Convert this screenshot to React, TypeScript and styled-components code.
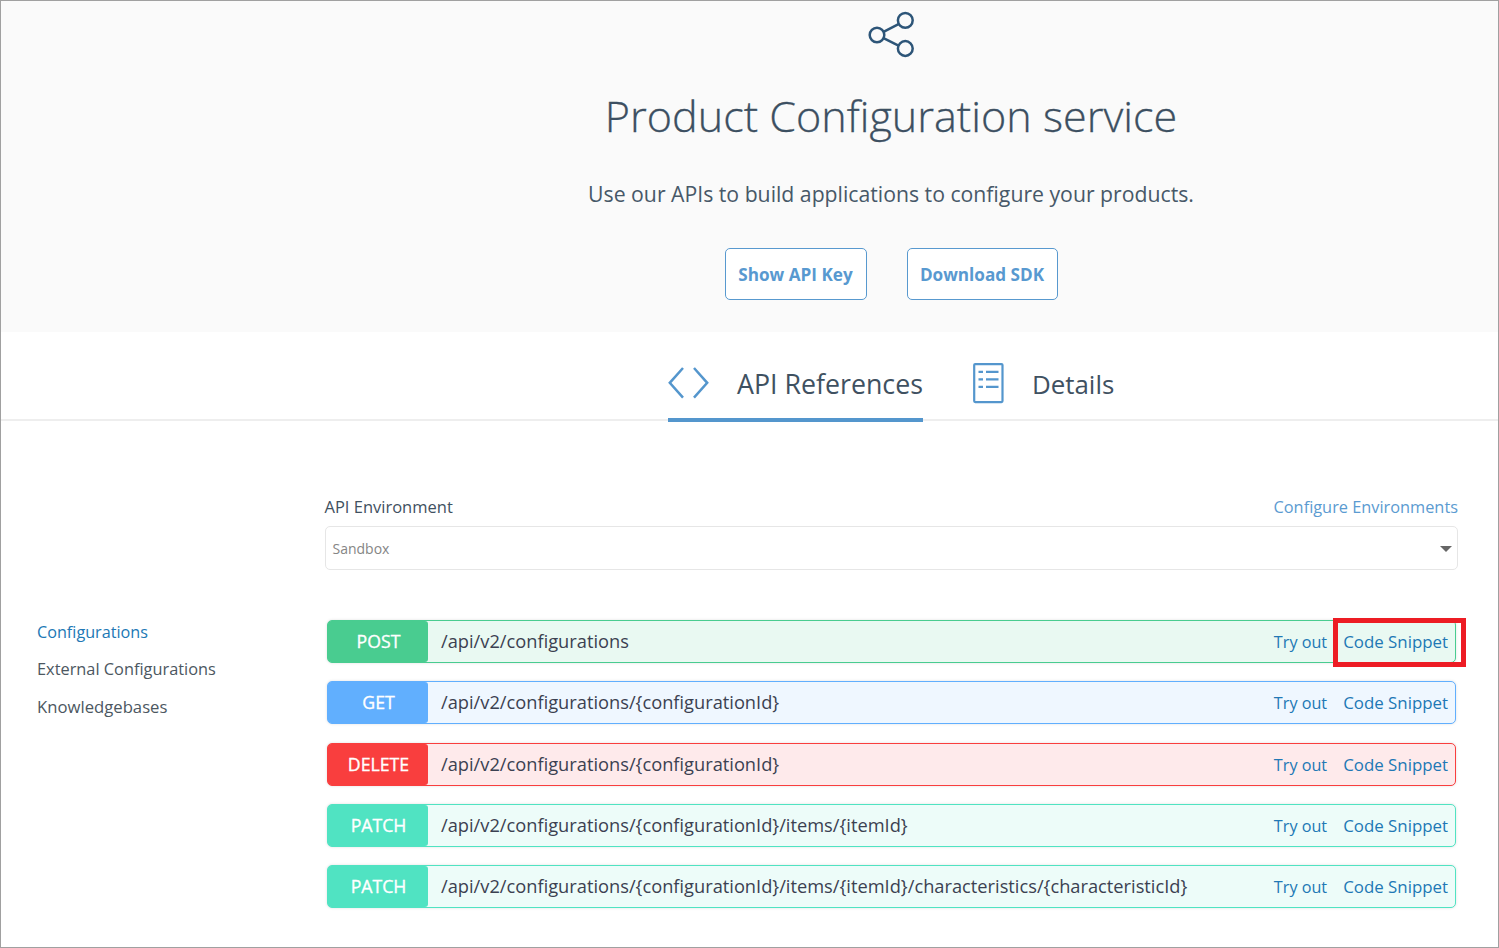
import React from 'react';
import styled, { createGlobalStyle } from 'styled-components';

const GlobalStyle = createGlobalStyle`
  *, *::before, *::after { box-sizing: border-box; }
  body {
    margin: 0;
    background: #fff;
    color: #3f5161;
    font-family: 'Open Sans', 'Noto Sans', sans-serif;
    white-space: nowrap;
  }
`;

const Page = styled.div`
  width: 1499px;
  height: 948px;
  overflow: hidden;
  border: 1px solid #a0a0a0;
  background: #fff;
`;

const Hero = styled.header`
  height: 331px;
  padding: 8px 0 0 283px;
  display: flex;
  flex-direction: column;
  align-items: center;
  background: #fafafa;
`;

const ShareIcon = styled.svg`
  width: 52px;
  height: 52px;
  flex: none;
`;

const Title = styled.h1`
  margin: 25px 0 0;
  font-size: 43.1px;
  font-weight: 300;
  line-height: 60px;
  color: #3c4f61;
  -webkit-text-stroke: 0.3px #3c4f61;
`;

const Subtitle = styled.p`
  margin: 33px 0 0;
  font-size: 21.23px;
  line-height: 30px;
  color: #475868;
`;

const Actions = styled.div`
  display: flex;
  gap: 40px;
  margin-top: 39px;
`;

const OutlineButton = styled.button<{ $width: number }>`
  width: ${(p) => p.$width}px;
  height: 52px;
  padding: 0;
  border: 1px solid #5899cf;
  border-radius: 5px;
  background: #fff;
  color: #5899d0;
  font: 700 17.15px 'Open Sans', sans-serif;
`;

const Tabs = styled.nav`
  height: 89px;
  display: flex;
  gap: 50px;
  padding-left: 667px;
  border-bottom: 2px solid #eeeeee;
`;

const Tab = styled.a<{ $active?: boolean; $gap: number }>`
  height: 90px;
  display: flex;
  align-items: center;
  gap: ${(p) => p.$gap}px;
  padding-top: ${(p) => (p.$active ? 18 : 17)}px;
  border-bottom: 4px solid ${(p) => (p.$active ? '#5496cd' : 'transparent')};
  font-size: ${(p) => (p.$active ? 26.75 : 25.9)}px;
  line-height: 36px;
  color: #3f5161;
`;

const TabIcon = styled.svg<{ $width: number }>`
  width: ${(p) => p.$width}px;
  height: 42px;
  flex: none;
`;

const Body = styled.main`
  display: grid;
  grid-template-columns: 287.5px 1133.5px;
  padding: 74px 0 0 36px;
`;

const SideNav = styled.aside`
  display: flex;
  flex-direction: column;
  padding-top: 118.5px;
`;

const SideLink = styled.a<{ $active?: boolean; $size?: number }>`
  height: 37.4px;
  font-size: ${(p) => p.$size ?? 16.35}px;
  line-height: 37.4px;
  color: ${(p) => (p.$active ? '#2178b5' : '#4c5761')};
`;

const EnvHeader = styled.div`
  display: flex;
  justify-content: space-between;
  font-size: 16.5px;
  line-height: 24px;
`;

const EnvLink = styled.a`
  font-size: 16.33px;
  color: #5b9bd1;
`;

const Select = styled.div`
  height: 44px;
  margin-top: 7px;
  padding: 2px 5px 0 7px;
  display: flex;
  align-items: center;
  justify-content: space-between;
  border: 1px solid #e6e6e6;
  border-radius: 5px;
  font-size: 14px;
  line-height: 20px;
  color: #858585;
`;

const Caret = styled.svg`
  width: 12px;
  height: 6px;
`;

const Operations = styled.div`
  display: flex;
  flex-direction: column;
  gap: 18px;
  padding: 50px 2px 0 2.5px;
`;

const Operation = styled.div<{ $color: string; $tint: string }>`
  height: 43px;
  display: flex;
  align-items: center;
  border: 1px solid ${(p) => p.$color};
  border-radius: 5px;
  background: ${(p) => p.$tint};
  box-shadow: 0 0 3px rgba(0, 0, 0, 0.12);

  &:nth-child(3) {
    margin-top: 1px;
  }
`;

const Method = styled.span<{ $color: string }>`
  width: 100px;
  align-self: stretch;
  padding-left: 1px;
  border-radius: 3px;
  background: ${(p) => p.$color};
  color: #fff;
  font-size: 17.7px;
  -webkit-text-stroke: 0.35px #fff;
  line-height: 41px;
  text-align: center;
`;

const Path = styled.span`
  flex: 1;
  padding-left: 13px;
  padding-bottom: 1px;
  font-size: 18.25px;
  line-height: 26px;
  color: #3b4151;
`;

const OpLink = styled.a<{ $size: number }>`
  position: relative;
  margin-right: ${(p) => (p.$size > 16.5 ? 7 : 16)}px;
  font-size: ${(p) => p.$size}px;
  line-height: 24px;
  color: #2178b5;
`;

const Highlight = styled.span`
  position: absolute;
  inset: -12px -18px -13px -10px;
  border: 5px solid #ed1c24;
`;

const green = ['#49cc90', '#e9f9f2'];
const blue = ['#61affe', '#eff7ff'];
const red = ['#f93e3e', '#feeaeb'];
const teal = ['#50e3c2', '#edfcf9'];

const operations = [
  { method: 'POST', path: '/api/v2/configurations', palette: green, marked: true },
  { method: 'GET', path: '/api/v2/configurations/{configurationId}', palette: blue },
  { method: 'DELETE', path: '/api/v2/configurations/{configurationId}', palette: red },
  { method: 'PATCH', path: '/api/v2/configurations/{configurationId}/items/{itemId}', palette: teal },
  {
    method: 'PATCH',
    path: '/api/v2/configurations/{configurationId}/items/{itemId}/characteristics/{characteristicId}',
    palette: teal,
  },
];

export default function App() {
  return (
    <Page>
      <GlobalStyle />
      <Hero>
        <ShareIcon viewBox="0 0 52 52" fill="none" stroke="#2d5578" strokeWidth="2.5">
          <circle cx="12" cy="26" r="7.3" />
          <circle cx="40.3" cy="11.3" r="7.4" />
          <circle cx="40.3" cy="39.5" r="7.4" />
          <path d="M18.5 22.8 34 14.8M18.5 29.2 34 36.8" />
        </ShareIcon>
        <Title>Product Configuration service</Title>
        <Subtitle>Use our APIs to build applications to configure your products.</Subtitle>
        <Actions>
          <OutlineButton $width={142}>Show API Key</OutlineButton>
          <OutlineButton $width={151}>Download SDK</OutlineButton>
        </Actions>
      </Hero>
      <Tabs>
        <Tab $active $gap={28}>
          <TabIcon $width={41} viewBox="0 0 41 42" fill="none" stroke="#5496cd" strokeWidth="2.5">
            <path d="M15 5 1.8 19.8 15 34.6M26 5l13.2 14.8L26 34.6" />
          </TabIcon>
          API References
        </Tab>
        <Tab $gap={27}>
          <TabIcon $width={32} viewBox="0 0 32 42" fill="none" stroke="#5496cd" strokeWidth="2.2">
            <rect x="1.2" y="1.1" width="28.3" height="38" rx="1" />
            <path d="M5.5 8.8H10M13 8.8h12.5M5.5 16.3H10M13 16.3h12.5M5.5 23.8H10M13 23.8h12.5" />
          </TabIcon>
          Details
        </Tab>
      </Tabs>
      <Body>
        <SideNav>
          <SideLink $active $size={16.2}>Configurations</SideLink>
          <SideLink>External Configurations</SideLink>
          <SideLink $size={16.7}>Knowledgebases</SideLink>
        </SideNav>
        <section>
          <EnvHeader>
            <span>API Environment</span>
            <EnvLink>Configure Environments</EnvLink>
          </EnvHeader>
          <Select>
            Sandbox
            <Caret viewBox="0 0 12 6">
              <path d="M0 0h12L6 6z" fill="#666" />
            </Caret>
          </Select>
          <Operations>
            {operations.map(({ method, path, palette, marked }) => (
              <Operation key={path + method} $color={palette[0]} $tint={palette[1]}>
                <Method $color={palette[0]}>{method}</Method>
                <Path>{path}</Path>
                <OpLink $size={16.2}>Try out</OpLink>
                <OpLink $size={16.88}>
                  Code Snippet
                  {marked && <Highlight />}
                </OpLink>
              </Operation>
            ))}
          </Operations>
        </section>
      </Body>
    </Page>
  );
}
